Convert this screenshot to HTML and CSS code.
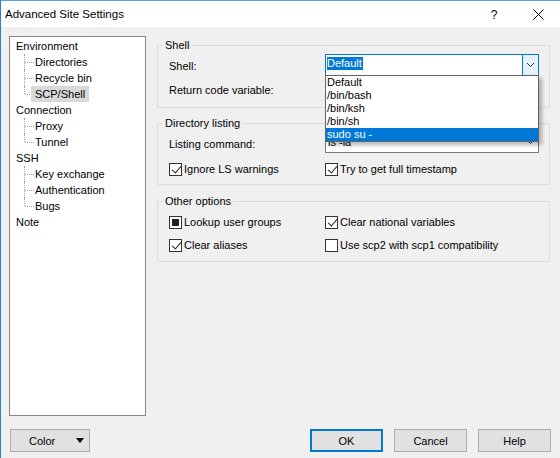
FILE: index.html
```html
<!DOCTYPE html>
<html>
<head>
<meta charset="utf-8">
<link rel="stylesheet" href="styles.css">
</head>
<body>
<div class="window">
  <div class="titlebar">
    <span class="title">Advanced Site Settings</span>
    <span class="caption-btn help">?</span>
    <span class="caption-btn close">
      <svg width="11" height="11" viewBox="0 0 11 11"><path d="M0.5 0.5 L10.5 10.5 M10.5 0.5 L0.5 10.5" stroke="#000" stroke-width="1" fill="none"/></svg>
    </span>
  </div>
  <div class="main">
    <div class="tree">
      <div class="node">Environment</div>
      <div class="child"><span>Directories</span></div>
      <div class="child"><span>Recycle bin</span></div>
      <div class="child last"><span class="sel">SCP/Shell</span></div>
      <div class="node">Connection</div>
      <div class="child"><span>Proxy</span></div>
      <div class="child last"><span>Tunnel</span></div>
      <div class="node">SSH</div>
      <div class="child"><span>Key exchange</span></div>
      <div class="child"><span>Authentication</span></div>
      <div class="child last"><span>Bugs</span></div>
      <div class="node">Note</div>
    </div>
    <div class="panel">
      <fieldset class="group g-shell">
        <legend>Shell</legend>
        <div class="grid">
          <div class="label">Shell:</div>
          <div class="combo focused">
            <span class="value"><span class="hl">Default</span></span>
            <span class="arrow active">
              <svg width="7" height="4" viewBox="0 0 7 4"><path d="M0 0 L3.5 3.5 L7 0" stroke="#333" stroke-width="1" fill="none"/></svg>
            </span>
            <div class="dropdown">
              <div class="opt">Default</div>
              <div class="opt">/bin/bash</div>
              <div class="opt">/bin/ksh</div>
              <div class="opt">/bin/sh</div>
              <div class="opt selected">sudo su -</div>
            </div>
          </div>
          <div class="label">Return code variable:</div>
          <div class="edit"></div>
        </div>
      </fieldset>
      <fieldset class="group g-dir">
        <legend>Directory listing</legend>
        <div class="grid">
          <div class="label lc">Listing command:</div>
          <div class="combo">
            <span class="value">ls -la</span>
            <span class="arrow">
              <svg width="7" height="4" viewBox="0 0 7 4"><path d="M0 0 L3.5 3.5 L7 0" stroke="#333" stroke-width="1" fill="none"/></svg>
            </span>
          </div>
        </div>
        <div class="checks first">
          <label class="check"><span class="box checked"></span>Ignore LS warnings</label>
          <label class="check"><span class="box checked"></span>Try to get full timestamp</label>
        </div>
      </fieldset>
      <fieldset class="group g-other">
        <legend>Other options</legend>
        <div class="checks first">
          <label class="check"><span class="box mixed"></span>Lookup user groups</label>
          <label class="check"><span class="box checked"></span>Clear national variables</label>
        </div>
        <div class="checks second">
          <label class="check"><span class="box checked"></span>Clear aliases</label>
          <label class="check"><span class="box"></span>Use scp2 with scp1 compatibility</label>
        </div>
      </fieldset>
    </div>
  </div>
  <div class="footer">
    <button class="btn color">Color<span class="tri"></span></button>
    <div class="spacer"></div>
    <button class="btn default">OK</button>
    <button class="btn">Cancel</button>
    <button class="btn">Help</button>
  </div>
</div>
</body>
</html>
```
FILE: styles.css
```css
* { box-sizing: border-box; }
html, body { margin: 0; padding: 0; }
body {
  font-family: "Liberation Sans", Arial, sans-serif;
  font-size: 11px;
  color: #000;
  background: #f0f0f0;
}
.window {
  width: 560px;
  height: 458px;
  border-left: 1px solid #2a80d5;
  border-top: 1px solid #5a9ee0;
  background: #f0f0f0;
  display: flex;
  flex-direction: column;
  overflow: hidden;
}
.titlebar {
  height: 26px;
  background: #fff;
  display: flex;
  align-items: center;
  padding-left: 4px;
  flex: none;
}
.title { font-size: 11.5px; flex: 1; }
.caption-btn {
  width: 44px;
  height: 26px;
  display: flex;
  align-items: center;
  justify-content: center;
  font-size: 12px;
}
.caption-btn.help { padding-top: 1px; }
.main {
  display: flex;
  align-items: flex-start;
  padding: 9px 0 0 8px;
  flex: none;
}
.tree {
  width: 137px;
  height: 380px;
  background: #fff;
  border: 1px solid #828790;
  padding: 1px 0 0 0;
  line-height: 16px;
}
.node { height: 16px; padding-left: 6px; }
.child {
  height: 16px;
  position: relative;
  padding-left: 21px;
}
.child::before {
  content: "";
  position: absolute;
  left: 14px;
  top: 0;
  height: 16px;
  border-left: 1px dotted #a0a0a0;
}
.child.last::before { height: 8px; }
.child::after {
  content: "";
  position: absolute;
  left: 15px;
  top: 8px;
  width: 9px;
  border-top: 1px dotted #a0a0a0;
}
.child span {
  position: relative;
  z-index: 1;
  padding: 0 4px;
  display: inline-block;
  height: 16px;
}
.child span.sel { background: #d9d9d9; }
.panel {
  margin-left: 11px;
  margin-top: 1px;
  width: 393px;
  display: flex;
  flex-direction: column;
}
.group {
  margin: 0;
  padding: 0 10px 0 11px;
  border: 1px solid #dcdcdc;
  min-width: 0;
}
.group legend {
  padding: 0 2px;
  margin-left: -6px;
  line-height: 16px;
}
.g-shell { padding-bottom: 7px; }
.g-dir { margin-top: 7px; padding-bottom: 7px; }
.g-other { margin-top: 8px; padding-bottom: 8px; }
.grid {
  display: grid;
  grid-template-columns: 156px 214px;
  row-gap: 2px;
  padding-top: 1px;
}
.g-dir .grid { padding-top: 0; }
.label { height: 22px; padding-top: 4px; line-height: 16px; }
.label.lc { padding-top: 5px; }
.combo {
  height: 22px;
  border: 1px solid #7a7a7a;
  background: #fff;
  display: flex;
  position: relative;
}
.combo.focused { border-color: #0078d7; }
.combo .value {
  flex: 1;
  padding: 2px 0 0 1px;
  line-height: 13px;
  height: 20px;
}
.combo .hl {
  display: inline-block;
  background: #0078d7;
  color: #fff;
  padding: 0 1px 0 0;
  height: 13px;
}
.g-dir .combo .value { padding: 4px 0 0 2px; }
.arrow {
  width: 16px;
  display: flex;
  align-items: center;
  justify-content: center;
}
.arrow.active {
  background: #e5f1fb;
  border-left: 1px solid #0078d7;
}
.dropdown {
  position: absolute;
  left: -1px;
  top: 20px;
  width: 214px;
  background: #fff;
  border: 1px solid #646464;
  z-index: 5;
  box-shadow: 3px 3px 4px rgba(0, 0, 0, 0.28);
}
.opt {
  height: 13px;
  line-height: 13px;
  padding-left: 1px;
}
.opt.selected { background: #0078d7; color: #fff; }
.edit { height: 22px; border: 1px solid #7a7a7a; background: #fff; }
.checks {
  display: grid;
  grid-template-columns: 156px 214px;
  height: 16px;
  line-height: 16px;
}
.g-dir .checks.first { margin-top: 8px; }
.g-other .checks.first { margin-top: 5px; }
.g-other .checks.second { margin-top: 7px; }
.check {
  display: flex;
  align-items: center;
  white-space: nowrap;
}
.box {
  width: 13px;
  height: 13px;
  border: 1px solid #333;
  background: #fff;
  margin-right: 2px;
  flex: none;
  position: relative;
}
.box.checked::after {
  content: "";
  position: absolute;
  left: 4px;
  top: 0px;
  width: 4px;
  height: 8px;
  border-right: 1px solid #222;
  border-bottom: 1px solid #222;
  transform: rotate(40deg);
  transform-origin: center;
}
.box.mixed::after {
  content: "";
  position: absolute;
  left: 2px;
  top: 2px;
  width: 7px;
  height: 7px;
  background: #222;
}
.footer {
  display: flex;
  align-items: center;
  padding: 0 9px 0 9px;
  margin-top: 13px;
  gap: 11px;
}
.spacer { flex: 1; }
.btn {
  font-family: "Liberation Sans", Arial, sans-serif;
  font-size: 11px;
  width: 73px;
  height: 23px;
  background: #e1e1e1;
  border: 1px solid #adadad;
  padding: 0;
  margin: 0;
  color: #000;
}
.btn.default { border: 2px solid #0078d7; }
.btn.color {
  width: 80px;
  display: flex;
  align-items: center;
  padding-left: 18px;
}
.tri {
  margin-left: 21px;
  width: 0;
  height: 0;
  border-left: 4px solid transparent;
  border-right: 4px solid transparent;
  border-top: 5px solid #000;
}
```
